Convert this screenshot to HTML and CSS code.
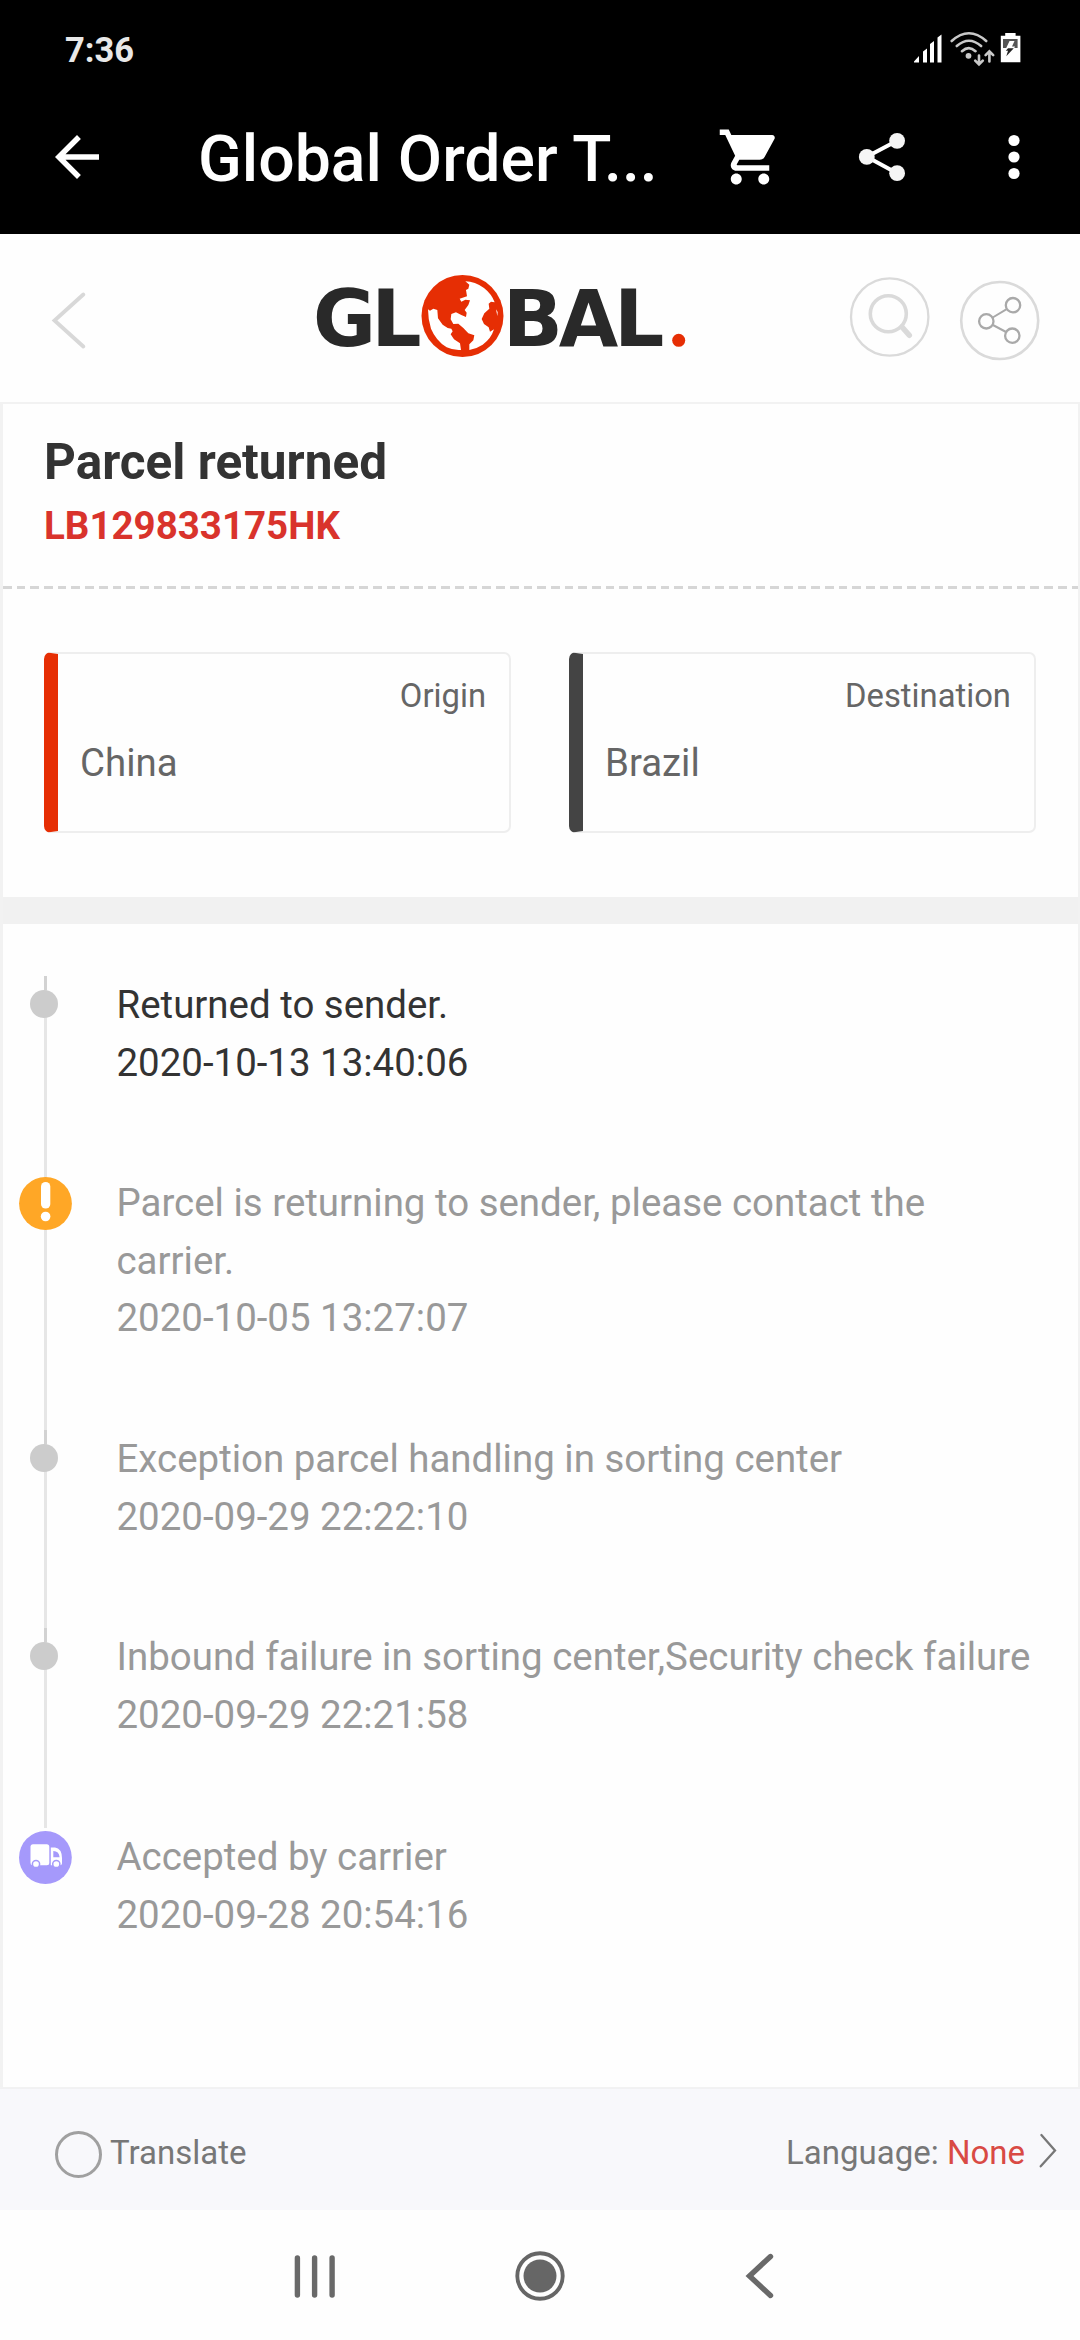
FILE: index.html
```html
<!DOCTYPE html>
<html lang="en">
<head>
<meta charset="utf-8">
<title>Global Order Tracking</title>
<link rel="stylesheet" href="styles.css">
</head>
<body>
<div class="screen">
  <header class="top">
    <div class="status">
      <span class="clock">7:36</span>
      <svg class="status-icons" width="110" height="40" viewBox="912 28 110 40">
        <path fill="#fff" d="M914 62.5v-1l5-5.500v6.500zM923 62.500v-11l4-3v14zM930 62.500v-18.500l4-3v21.500zM937.500 62.500v-25l4-3v28z"/>
        <g fill="none" stroke="#c9c9c9" stroke-width="2.600" stroke-linecap="round">
          <path d="M951.700 41Q968.900 25.500 986.200 41M956.800 46Q968.900 35.500 981.100 46M962 51.200Q968.900 45 975.500 51.200"/>
          <path d="M979 55.500v8.500M975.200 60.700l3.800 3.800 3.800-3.800M989.400 61.500v-9M985.600 55.200l3.800-3.800 3.800 3.800"/>
        </g>
        <circle cx="968.500" cy="55.800" r="2.900" fill="#c9c9c9"/>
        <path fill="#fff" d="M1005.200 33h10.400v2.700h4.800v26.600h-19.600v-26.600h4.400z"/>
        <path fill="#555" d="M1003 39h14.600v9h-14.600z"/>
        <path fill="#fff" d="M1009.500 41h5l-2.500 5.500h3l-1 2h-8z"/>
        <path fill="#222" d="M1008 48.300h5.800l-7.500 8 1.700-5.500h-2.200z"/>
      </svg>
    </div>
    <div class="appbar">
      <svg class="back" width="66" height="66" viewBox="0 0 24 24"><path fill="#fff" d="M20 11H7.830l5.590-5.590L12 4l-8 8 8 8 1.410-1.410L7.830 13H20v-2z"/></svg>
      <h1 class="title">Global Order T...</h1>
      <svg class="cart" width="66" height="66" viewBox="0 0 24 24"><path fill="#fff" d="M7 18c-1.100 0-1.990.9-1.990 2S5.900 22 7 22s2-.9 2-2-.9-2-2-2zM1 2v2h2l3.600 7.590-1.350 2.450c-.16.28-.25.610-.25.960 0 1.100.9 2 2 2h12v-2H7.420c-.14 0-.25-.11-.25-.25l.03-.12.900-1.630h7.450c.75 0 1.410-.41 1.750-1.030l3.580-6.490A1.003 1.003 0 0 0 20 4H5.210l-.94-2H1zm16 16c-1.100 0-1.990.9-1.990 2s.89 2 1.990 2 2-.9 2-2-.9-2-2-2z"/></svg>
      <svg class="share" width="48" height="52" viewBox="858 131.500 48 52"><path d="M897.100 141.300l-30.300 16 30.300 16.400" fill="none" stroke="#fff" stroke-width="4"/><g fill="#f5f5f5"><circle cx="897.100" cy="141.300" r="7.900"/><circle cx="866.800" cy="157.400" r="7.900"/><circle cx="897.100" cy="173.700" r="7.900"/></g></svg>
      <svg class="more" width="12" height="48" viewBox="0 0 12 48" fill="#fff"><circle cx="6" cy="7.500" r="5.600"/><circle cx="6" cy="24" r="5.600"/><circle cx="6" cy="40.500" r="5.600"/></svg>
    </div>
  </header>

  <div class="brandbar">
    <svg class="brand-back" width="36" height="58" viewBox="51 291 36 58"><path d="M83.300 294.500L54.500 320.500L83.300 346.500" fill="none" stroke="#d8d8d8" stroke-width="3.800" stroke-linecap="round"/></svg>
    <svg class="logo" width="376" height="110" viewBox="312 260 376 110" role="img" aria-label="Global">
      <g class="logo-text">
        <text x="313" y="345.700" textLength="63" lengthAdjust="spacingAndGlyphs">G</text>
        <text x="371.300" y="345.700">L</text>
        <text x="502.800" y="346">B</text>
        <text x="558.700" y="346" textLength="59.500" lengthAdjust="spacingAndGlyphs">A</text>
        <text x="614" y="346">L</text>
      </g>
      <circle cx="462.500" cy="316" r="41" fill="#e62e04"/>
      <g transform="translate(300 250) scale(.33333)" fill="#fff">
        <path d="M384 178L390 182L400 176L412 180L414 205L428 224L443 234L454 236L458 244L452 253L462 268L480 280L483 300Q462 302 440 292Q408 272 393 236Q384 208 384 178Z"/>
        <path d="M496 94Q525 95 552 114Q575 132 584 157L573 155L566 161L568 176L553 190L545 207L552 222L566 232L570 245L582 238Q573 267 548 284Q530 296 508 300L508 283L520 271L523 256L505 250L490 234L475 221L460 222L452 208L454 192L468 187L484 195L498 201L500 188L494 180L505 165L510 151L496 149L484 155L479 146L501 139L498 120L505 116L508 104Z"/>
        <path d="M588 178l5 8-1 12z"/>
      </g>
      <circle cx="678.700" cy="340.300" r="6.500" fill="#e62e04"/>
    </svg>
    <svg class="brand-search" width="82" height="82" viewBox="849 276 82 82" fill="none" stroke="#dadada"><circle cx="889.700" cy="317" r="38.700" stroke-width="2.300"/><circle cx="888.300" cy="313.700" r="18" stroke-width="3.600"/><path d="M902 327l7.300 8.300" stroke-width="5.500" stroke-linecap="round"/></svg>
    <svg class="brand-share" width="82" height="82" viewBox="959 280 82 82" fill="none" stroke="#a9a9a9" stroke-width="2.300"><circle cx="999.700" cy="320.500" r="38.500" stroke="#dadada" stroke-width="2.600"/><circle cx="1013" cy="305.200" r="7.200"/><circle cx="986.300" cy="321.300" r="7.200"/><circle cx="1012.300" cy="335.700" r="7.200"/><path d="M992.700 317.500l14-8.300M992.900 325l13.200 7" stroke-width="2"/></svg>
  </div>

  <main class="sheet">
    <section class="parcel">
      <h2 class="parcel-state">Parcel returned</h2>
      <div class="parcel-no">LB129833175HK</div>
    </section>
    <div class="dashes"></div>
    <section class="route">
      <div class="place place-origin"><span class="place-kind">Origin</span><span class="place-name">China</span></div>
      <div class="place place-dest"><span class="place-kind">Destination</span><span class="place-name">Brazil</span></div>
    </section>
    <div class="band"></div>
    <ol class="events">
      <li class="event current">
        <div class="rail"><i class="tick"></i><i class="dot"></i></div>
        <div class="event-text">Returned to sender.<br>2020-10-13 13:40:06</div>
      </li>
      <li class="event">
        <div class="rail"><svg class="badge" width="53" height="53" viewBox="0 0 53 53"><circle cx="26.500" cy="26.500" r="26.400" fill="#ffa726"/><rect x="22" y="5" width="9.300" height="26.500" rx="4.600" fill="#fff"/><circle cx="26.600" cy="39.500" r="4.800" fill="#fff"/></svg></div>
        <div class="event-text">Parcel is returning to sender, please contact the carrier.<br>2020-10-05 13:27:07</div>
      </li>
      <li class="event">
        <div class="rail"><i class="tick"></i><i class="dot"></i></div>
        <div class="event-text">Exception parcel handling in sorting center<br>2020-09-29 22:22:10</div>
      </li>
      <li class="event before-last">
        <div class="rail"><i class="tick"></i><i class="dot"></i></div>
        <div class="event-text">Inbound failure in sorting center,Security check failure<br>2020-09-29 22:21:58</div>
      </li>
      <li class="event last">
        <div class="rail"><svg class="badge" width="53" height="53" viewBox="0 0 53 53"><circle cx="26.400" cy="26.500" r="26.400" fill="#a599fb"/><g fill="#fff"><rect x="11.500" y="13.300" width="18.800" height="21" rx="2.500"/><path fill-rule="evenodd" d="M31.800 16.500H36Q42.800 17.500 43 27V32.500Q43 34.300 41 34.300H31.800ZM34.300 20V26.300H40.600Q40 20 34.300 20Z"/></g><g fill="#fff" stroke="#a599fb" stroke-width="1.500"><circle cx="17" cy="33" r="3.600"/><circle cx="37.300" cy="33" r="3.600"/></g></svg></div>
        <div class="event-text">Accepted by carrier<br>2020-09-28 20:54:16</div>
      </li>
    </ol>
  </main>

  <footer class="translate">
    <span class="radio"></span>
    <span class="translate-label">Translate</span>
    <span class="language">Language: <b class="language-value">None</b></span>
    <svg class="chevron" width="18" height="36" viewBox="1039 2134 18 36"><path d="M1041.400 2136L1055 2151.500L1040.700 2167.300" fill="none" stroke="#777" stroke-width="2.300" stroke-linecap="round"/></svg>
  </footer>

  <nav class="nav">
    <svg width="44" height="46" viewBox="293 2253 44 46" stroke="#696969" stroke-width="5.400" stroke-linecap="round"><path d="M297.400 2258v37M314.600 2258v37M332.100 2258v37"/></svg>
    <svg width="52" height="52" viewBox="0 0 52 52"><circle cx="26" cy="26" r="22.700" fill="none" stroke="#666" stroke-width="3.900"/><circle cx="26" cy="26" r="16.500" fill="#666"/></svg>
    <svg width="30" height="48" viewBox="745 2252 30 48"><path d="M770.500 2256.500L749.500 2276L770.500 2295.500" fill="none" stroke="#696969" stroke-width="5.400" stroke-linecap="round"/></svg>
  </nav>
</div>
</body>
</html>
```

FILE: styles.css
```css
* { box-sizing: border-box; }
body {
  margin: 0;
  background: #fefefe;
  font-family: Roboto, "Liberation Sans", sans-serif;
}
svg { display: block; flex: none; }
.screen {
  display: flex;
  flex-direction: column;
  width: 1080px;
  height: 2340px;
  overflow: hidden;
}

/* status bar and app bar */
.top { height: 234px; background: #000; color: #fff; }
.status {
  display: flex;
  justify-content: space-between;
  height: 80px;
  padding: 28px 58px 0 65px;
}
.clock {
  height: 42px;
  color: #e8e8e8;
  font-size: 34.500px;
  font-weight: 700;
  line-height: 45px;
}
.appbar {
  display: flex;
  align-items: center;
  height: 154px;
  padding-left: 44px;
}
.title {
  width: 517px;
  margin: 4px 0 0 88px;
  font-size: 64.300px;
  font-weight: 500;
  line-height: 80px;
  white-space: nowrap;
}
.cart { margin-left: 2px; }
.share { margin-left: 75px; }
.more { margin-left: 102px; }

/* brand bar */
.brandbar {
  display: flex;
  height: 168px;
  padding-left: 51px;
}
.brand-back { margin-top: 57px; }
.logo { margin: 26px 0 0 225px; overflow: visible; }
.logo-text {
  fill: #292929;
  font: 700 79px "DejaVu Sans", sans-serif;
}
.brand-search { margin: 42px 0 0 161px; }
.brand-share { margin: 46px 0 0 28px; }

/* parcel sheet */
.sheet {
  height: 1686px;
  border: solid #f2f2f2;
  border-width: 2px 2px 1px 3px;
}
.parcel { height: 182px; padding: 28px 41px 0; }
.parcel-state {
  margin: 0;
  color: #333;
  font-size: 49.500px;
  font-weight: 700;
  line-height: 60px;
}
.parcel-no {
  margin-top: 11px;
  color: #d9332c;
  font-size: 38.500px;
  font-weight: 700;
  line-height: 46px;
}
.dashes {
  height: 3px;
  background: repeating-linear-gradient(90deg, #d6d6d6 0 8.700px, transparent 8.700px 13.700px);
}
.route {
  display: grid;
  grid-template-columns: 467px 467px;
  gap: 58px;
  height: 308px;
  padding: 63px 41px;
}
.place {
  display: flex;
  flex-direction: column;
  height: 181px;
  padding: 20px 23px 0 22px;
  border: 2px solid #eee;
  border-left-width: 14px;
  border-radius: 7px;
  color: #666;
}
.place-origin { border-left-color: #e62e04; }
.place-dest { border-left-color: #444; }
.place-kind {
  align-self: flex-end;
  font-size: 32.800px;
  line-height: 44px;
}
.place-name { margin-top: 21px; font-size: 38.400px; line-height: 48px; }
.band { height: 27px; background: #f1f1f1; }

/* tracking history */
.events {
  margin: 0;
  padding: 52px 40px 0 27px;
  list-style: none;
}
.event {
  display: grid;
  grid-template-columns: 86.500px 1fr;
  padding-bottom: 83px;
  background: linear-gradient(#e6e6e6, #e6e6e6) 14px 0 / 3px 100% no-repeat;
}
.before-last { padding-bottom: 85px; }
.last { background: none; }
.rail { display: flex; flex-direction: column; }
.tick { width: 3px; height: 14px; margin-left: 14px; background: #d2d2d2; }
.dot { width: 28px; height: 28px; border-radius: 50%; background: #ccc; }
.badge { margin: 3px 0 0 -11px; }
.event-text { color: #999; font-size: 38.450px; line-height: 57.600px; }
.current .event-text { color: #333; }

/* translation bar */
.translate {
  display: flex;
  align-items: center;
  height: 122px;
  padding: 2px 23px 0 55px;
  background: #f8f8fb;
  border-top: 1px solid #f1f1f3;
  color: #777;
  font-size: 33px;
}
.radio {
  width: 47px;
  height: 47px;
  margin-top: 8px;
  border: 3px solid #a0a0a0;
  border-radius: 50%;
}
.translate-label { margin-left: 8px; margin-top: 4px; }
.language { margin: 4px 14px 0 auto; }
.language-value { color: #d94a44; font-weight: 400; }

/* system navigation */
.nav {
  display: flex;
  align-items: center;
  height: 130px;
  padding: 2px 0 0 293px;
}
.nav svg:nth-child(2) { margin-left: 177px; }
.nav svg:nth-child(3) { margin-left: 179px; }
```
